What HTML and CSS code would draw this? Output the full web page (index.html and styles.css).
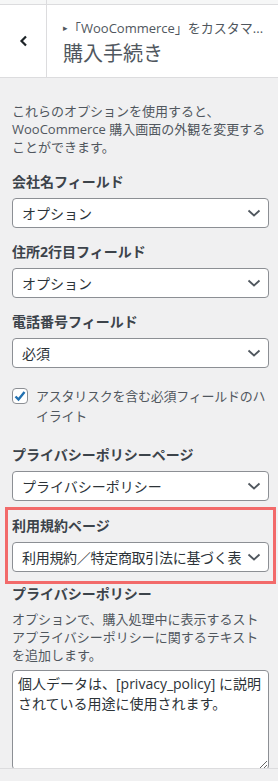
FILE: index.html
```html
<!DOCTYPE html>
<html lang="ja">
  <head>
    <meta charset="UTF-8" />
    <meta name="viewport" content="width=device-width, initial-scale=1.0" />
    <title>購入手続き</title>
    <link rel="stylesheet" href="styles.css">
  </head>
  <body>
    <div class="topbar"><span></span></div>

    <div class="header">
      <button class="back" aria-label="戻る">
        <svg width="10" height="12" viewBox="0 0 10 12">
          <polyline points="7,1.5 2.5,6 7,10.5" fill="none" stroke="#1d2327" stroke-width="2.2" />
        </svg>
      </button>
      <div class="titles">
        <div class="crumb"><span class="tri">▸</span>「WooCommerce」をカスタマ...</div>
        <div class="title">購入手続き</div>
      </div>
    </div>

    <div class="main">
      <p class="desc intro">これらのオプションを使用すると、WooCommerce 購入画面の外観を変更することができます。</p>

      <div class="field">
        <label class="label">会社名フィールド</label>
        <div class="select"><span>オプション</span><svg class="arrow" width="14" height="8" viewBox="0 0 14 8"><polyline points="1.5,1.5 7,6.5 12.5,1.5" fill="none" stroke="#50575e" stroke-width="1.8" /></svg></div>
      </div>

      <div class="field">
        <label class="label">住所2行目フィールド</label>
        <div class="select"><span>オプション</span><svg class="arrow" width="14" height="8" viewBox="0 0 14 8"><polyline points="1.5,1.5 7,6.5 12.5,1.5" fill="none" stroke="#50575e" stroke-width="1.8" /></svg></div>
      </div>

      <div class="field">
        <label class="label">電話番号フィールド</label>
        <div class="select"><span>必須</span><svg class="arrow" width="14" height="8" viewBox="0 0 14 8"><polyline points="1.5,1.5 7,6.5 12.5,1.5" fill="none" stroke="#50575e" stroke-width="1.8" /></svg></div>
      </div>

      <div class="check">
        <span class="box">
          <svg width="14" height="14" viewBox="0 0 14 14"><polyline points="2.5,7.5 5.5,10.5 11.5,3" fill="none" stroke="#2271b1" stroke-width="2.4" /></svg>
        </span>
        <span class="check-text">アスタリスクを含む必須フィールドのハイライト</span>
      </div>

      <div class="field">
        <label class="label">プライバシーポリシーページ</label>
        <div class="select"><span>プライバシーポリシー</span><svg class="arrow" width="14" height="8" viewBox="0 0 14 8"><polyline points="1.5,1.5 7,6.5 12.5,1.5" fill="none" stroke="#50575e" stroke-width="1.8" /></svg></div>
      </div>

      <div class="highlight">
        <div class="field">
          <label class="label">利用規約ページ</label>
          <div class="select"><span>利用規約／特定商取引法に基づく表</span><svg class="arrow" width="14" height="8" viewBox="0 0 14 8"><polyline points="1.5,1.5 7,6.5 12.5,1.5" fill="none" stroke="#50575e" stroke-width="1.8" /></svg></div>
        </div>
      </div>

      <div class="field">
        <label class="label">プライバシーポリシー</label>
        <p class="desc">オプションで、購入処理中に表示するストアプライバシーポリシーに関するテキストを追加します。</p>
        <textarea class="textarea">個人データは、[privacy_policy] に説明されている用途に使用されます。</textarea>
      </div>
    </div>

    <div class="footer"></div>
  </body>
</html>
```

FILE: styles.css
```css
body {
  font-family: "Open Sans", "Noto Sans CJK JP", sans-serif;
  margin: 0;
  height: 781px;
  display: flex;
  flex-direction: column;
  overflow: hidden;
  background-color: #f0f0f1;
  color: #50575e;
}

.topbar {
  height: 4px;
  flex-shrink: 0;
  background-color: #f6f7f7;
  border-bottom: 1px solid #dcdcde;
}

.topbar span {
  display: block;
  width: 46px;
  height: 4px;
  border-right: 1px solid #dcdcde;
}

.header {
  display: flex;
  flex-shrink: 0;
  height: 72px;
  background-color: #fff;
  border-bottom: 1px solid #dcdcde;
}

.back {
  width: 47px;
  padding: 0 0 0 2px;
  border: none;
  border-right: 1px solid #dcdcde;
  background: #fff;
  display: flex;
  align-items: center;
  justify-content: center;
}

.titles {
  padding: 14px 0 0 16px;
  min-width: 0;
}

.crumb {
  font-size: 13px;
  line-height: 18px;
  color: #50575e;
  white-space: nowrap;
}

.tri {
  font-size: 9px;
  position: relative;
  top: -2px;
}

.title {
  margin-top: 2px;
  font-size: 20px;
  line-height: 26px;
  color: #50575e;
}

.main {
  flex: 1;
  overflow: hidden;
  padding: 0 9px 0 12px;
}

.desc {
  margin: 0 0 6px;
  font-size: 13px;
  line-height: 18px;
  color: #50575e;
}

.intro {
  margin: 24px 0 16px;
}

.field {
  margin-bottom: 14px;
}

.label {
  display: block;
  margin-bottom: 6px;
  font-size: 14px;
  line-height: 20px;
  font-weight: 700;
  color: #3c434a;
}

.select {
  box-sizing: border-box;
  height: 30px;
  display: flex;
  align-items: center;
  justify-content: space-between;
  padding: 0 7px 0 9px;
  background-color: #fff;
  border: 1px solid #8c8f94;
  border-radius: 4px;
  font-size: 14px;
  color: #2c3338;
}

.select span {
  white-space: nowrap;
}

.arrow {
  flex-shrink: 0;
  margin-left: 2px;
}

.check {
  display: flex;
  align-items: flex-start;
  margin: 18px 0 19px;
}

.box {
  box-sizing: border-box;
  width: 16px;
  height: 16px;
  margin: 2px 8px 0 0;
  flex-shrink: 0;
  background-color: #fff;
  border: 1px solid #8c8f94;
  border-radius: 4px;
  display: flex;
  align-items: center;
  justify-content: center;
}

.check-text {
  font-size: 13px;
  line-height: 20px;
  letter-spacing: -0.25px;
  color: #50575e;
}

.highlight {
  margin: -8px -7px 0;
  padding: 6px 4px 9px;
  border: 3px solid #f26a6a;
}

.highlight .field {
  margin-bottom: 0;
}

.highlight .select span {
  letter-spacing: -0.3px;
}

.textarea {
  box-sizing: border-box;
  display: block;
  width: 100%;
  height: 100px;
  padding: 3px 5px;
  background-color: #fff;
  border: 1px solid #8c8f94;
  border-radius: 4px;
  font-family: "Open Sans", "Noto Sans CJK JP", sans-serif;
  font-size: 14px;
  line-height: 20px;
  color: #2c3338;
}

.footer {
  height: 12px;
  flex-shrink: 0;
  background-color: #f0f0f1;
  border-top: 1px solid #dcdcde;
}
```
